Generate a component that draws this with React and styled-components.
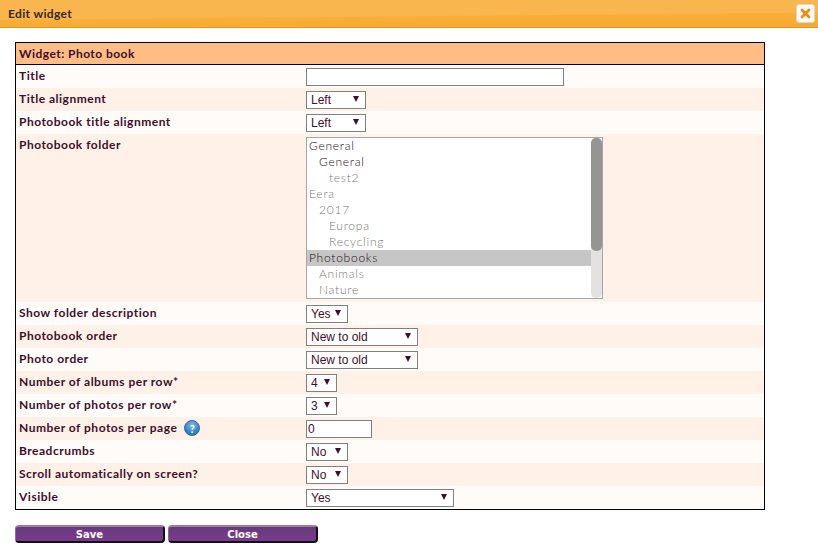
import styled, { createGlobalStyle } from "styled-components";

const GlobalStyle = createGlobalStyle`
  html, body {
    margin: 0;
    padding: 0;
    background: #fff;
    overflow: hidden;
  }
  body {
    font-family: "Lato", "Open Sans", sans-serif;
    font-size: 12px;
    color: #3d0f2b;
  }
`;

const TitleBar = styled.header`
  height: 28px;
  box-sizing: border-box;
  display: flex;
  align-items: center;
  justify-content: space-between;
  padding: 0 3px 0 8px;
  background: linear-gradient(179.5deg, #fab64e 0, #fab64e 56%, #f8ae38 60%, #f6a92e 100%);
  border-bottom: 1px solid #e0961c;
  color: #33291c;
  font-size: 12px;
  font-weight: 700;
  letter-spacing: 0.35px;
`;

const CloseButton = styled.button`
  width: 19px;
  height: 19px;
  padding: 0;
  display: flex;
  align-items: center;
  justify-content: center;
  background: #fdfbf7;
  border: 1px solid #e3d8c6;
  border-radius: 3px;
`;

const Content = styled.main`
  padding: 14px 15px 0;
`;

const FormTable = styled.section`
  width: 750px;
  box-sizing: border-box;
  border: 1px solid #000;
`;

const TableHead = styled.h2`
  margin: 0;
  height: 22px;
  box-sizing: border-box;
  padding: 0 3px;
  display: flex;
  align-items: center;
  background: #ffbd86;
  border-bottom: 1px solid #000;
  font-size: 12px;
  font-weight: 700;
  letter-spacing: 0.45px;
`;

const Row = styled.div`
  display: grid;
  grid-template-columns: 290px 1fr;
  height: ${(p) => p.$height || 23}px;
  background: ${(p) => (p.$alt ? "#fff1e8" : "#fffbf8")};
`;

const Label = styled.div`
  padding: 3px 0 0 3px;
  display: flex;
  align-items: flex-start;
  gap: 7px;
  font-weight: 700;
  letter-spacing: 0.5px;
  line-height: 15px;
`;

const Field = styled.div`
  display: flex;
  align-items: flex-start;
  padding-top: 3px;
`;

const SelectWrap = styled.div`
  position: relative;
  width: ${(p) => p.$width}px;
  height: 18px;

  &::after {
    content: "";
    position: absolute;
    right: 7px;
    top: 5px;
    border-left: 3px solid transparent;
    border-right: 3px solid transparent;
    border-top: 6px solid #3d0f2b;
    pointer-events: none;
  }
`;

const Select = styled.select`
  appearance: none;
  width: 100%;
  height: 100%;
  box-sizing: border-box;
  margin: 0;
  padding: 0 0 0 4px;
  border: 1px solid #808080;
  border-radius: 0;
  background: #fff;
  color: #3d0f2b;
  font-family: "Liberation Sans", Arial, sans-serif;
  font-size: 12px;
`;

const TextInput = styled.input`
  width: ${(p) => p.$width}px;
  height: 18px;
  box-sizing: border-box;
  margin: 0;
  padding: 0 1px;
  border: 1px solid #808080;
  background: #fff;
  color: #3d0f2b;
  font-family: "Liberation Sans", Arial, sans-serif;
  font-size: 12px;
`;

const ListBox = styled.div`
  width: 297px;
  height: 162px;
  box-sizing: border-box;
  display: flex;
  background: #fff;
  border: 1px solid #a9a5a2;
  overflow: hidden;
`;

const ListItems = styled.div`
  flex: 1;
`;

const ListItem = styled.div`
  height: 16px;
  line-height: 16px;
  padding-left: ${(p) => 2 + p.$depth * 10}px;
  color: ${(p) => (p.$dim ? "#807878" : "#1c0c18")};
  background: ${(p) => (p.$selected ? "#c6c6c6" : "transparent")};
  font-weight: 300;
  letter-spacing: 0.75px;
  white-space: nowrap;
`;

const ScrollTrack = styled.div`
  width: 11px;
  background: #e2e2e2;
  border-radius: 5px;
`;

const ScrollThumb = styled.div`
  height: 113px;
  background: #959595;
  border-radius: 5px;
`;

const HelpIcon = styled.span`
  width: 16px;
  height: 16px;
  border-radius: 50%;
  box-sizing: border-box;
  display: inline-flex;
  align-items: center;
  justify-content: center;
  background: radial-gradient(circle at 50% 30%, #7db8e8, #2f7cc4 70%);
  border: 1px solid #2a6aa8;
  color: #fff;
  font-size: 11px;
  font-weight: 700;
  letter-spacing: 0;
`;

const Actions = styled.div`
  display: flex;
  gap: 3px;
  margin-top: 15px;
`;

const PurpleButton = styled.button`
  width: 150px;
  height: 18px;
  box-sizing: border-box;
  padding: 0;
  border: 0;
  border-top: 2px solid #9a7aa6;
  border-left: 1px solid #8a6a98;
  border-right: 2px solid #111;
  border-bottom: 2px solid #111;
  border-radius: 4px;
  background: linear-gradient(#683a7e, #7a3a8c);
  color: #fff;
  font-family: "DejaVu Sans", Verdana, sans-serif;
  font-size: 10px;
  font-weight: 700;
  line-height: 13px;
`;

const folders = [
  { name: "General", depth: 0 },
  { name: "General", depth: 1 },
  { name: "test2", depth: 2, dim: true },
  { name: "Eera", depth: 0, dim: true },
  { name: "2017", depth: 1, dim: true },
  { name: "Europa", depth: 2, dim: true },
  { name: "Recycling", depth: 2, dim: true },
  { name: "Photobooks", depth: 0, selected: true },
  { name: "Animals", depth: 1, dim: true },
  { name: "Nature", depth: 1, dim: true },
];

const upperRows = [
  { label: "Title alignment", value: "Left", width: 60 },
  { label: "Photobook title alignment", value: "Left", width: 60 },
];

const lowerRows = [
  { label: "Show folder description", value: "Yes", width: 42 },
  { label: "Photobook order", value: "New to old", width: 112 },
  { label: "Photo order", value: "New to old", width: 112 },
  { label: "Number of albums per row*", value: "4", width: 31 },
  { label: "Number of photos per row*", value: "3", width: 31 },
];

function SelectRow({ row, alt }) {
  return (
    <Row $alt={alt}>
      <Label>{row.label}</Label>
      <Field>
        <SelectWrap $width={row.width}>
          <Select defaultValue={row.value}>
            <option>{row.value}</option>
          </Select>
        </SelectWrap>
      </Field>
    </Row>
  );
}

export default function App() {
  return (
    <>
      <GlobalStyle />
      <TitleBar>
        Edit widget
        <CloseButton aria-label="Close">
          <svg width="11" height="11" viewBox="0 0 11 11">
            <path d="M2 2 L9 9 M9 2 L2 9" stroke="#f08a0c" strokeWidth="2.8" strokeLinecap="round" />
          </svg>
        </CloseButton>
      </TitleBar>
      <Content>
        <FormTable>
          <TableHead>Widget: Photo book</TableHead>
          <Row>
            <Label>Title</Label>
            <Field>
              <TextInput $width={258} />
            </Field>
          </Row>
          <SelectRow row={upperRows[0]} alt />
          <SelectRow row={upperRows[1]} />
          <Row $alt $height={168}>
            <Label>Photobook folder</Label>
            <Field>
              <ListBox>
                <ListItems>
                  {folders.map((f, i) => (
                    <ListItem key={i} $depth={f.depth} $dim={f.dim} $selected={f.selected}>
                      {f.name}
                    </ListItem>
                  ))}
                </ListItems>
                <ScrollTrack>
                  <ScrollThumb />
                </ScrollTrack>
              </ListBox>
            </Field>
          </Row>
          {lowerRows.map((row, i) => (
            <SelectRow key={row.label} row={row} alt={i % 2 === 1} />
          ))}
          <Row $alt>
            <Label>
              Number of photos per page
              <HelpIcon>?</HelpIcon>
            </Label>
            <Field>
              <TextInput $width={66} defaultValue="0" />
            </Field>
          </Row>
          <SelectRow row={{ label: "Breadcrumbs", value: "No", width: 42 }} />
          <SelectRow row={{ label: "Scroll automatically on screen?", value: "No", width: 42 }} alt />
          <SelectRow row={{ label: "Visible", value: "Yes", width: 148 }} />
        </FormTable>
        <Actions>
          <PurpleButton>Save</PurpleButton>
          <PurpleButton>Close</PurpleButton>
        </Actions>
      </Content>
    </>
  );
}
